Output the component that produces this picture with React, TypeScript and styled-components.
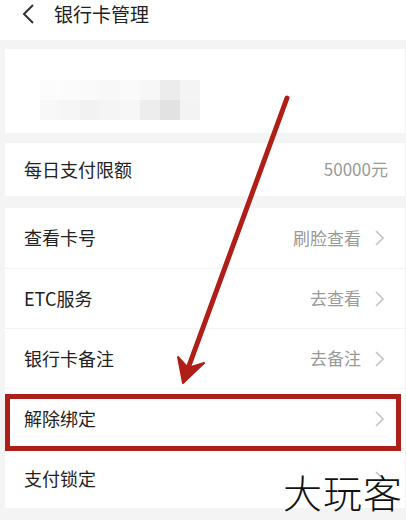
import { FC } from 'react'
import styled, { createGlobalStyle } from 'styled-components'

const GlobalStyle = createGlobalStyle`
  html, body {
    margin: 0;
    padding: 0;
    background: #f4f4f4;
  }
  * {
    box-sizing: border-box;
  }
`

const Page = styled.div`
  position: relative;
  width: 406px;
  height: 520px;
  overflow: hidden;
  background: #f4f4f4;
  font-family: 'Noto Sans CJK SC', 'Noto Sans', sans-serif;
`

const Header = styled.div`
  display: flex;
  align-items: flex-start;
  gap: 18px;
  height: 40px;
  padding-left: 22px;
  background: #fff;
  color: #222;
  font-size: 19px;
  line-height: 28px;
`

const Body = styled.div`
  display: flex;
  flex-direction: column;
  padding: 0 1px 0 5px;
`

const CardBox = styled.div`
  height: 84px;
  margin-top: 9px;
  padding: 31px 0 0 35px;
  background: #fff;
`

const Mosaic = styled.div`
  display: grid;
  grid-template-columns: repeat(8, 20px);
  grid-auto-rows: 20px;
`

const Tile = styled.div<{ $shade: string }>`
  background: ${(p) => p.$shade};
`

const Group = styled.div<{ $gap: number }>`
  display: flex;
  flex-direction: column;
  margin-top: ${(p) => p.$gap}px;
  background: #fff;
`

const Row = styled.div<{ $h: number }>`
  display: flex;
  align-items: center;
  height: ${(p) => p.$h}px;
  padding: 0 21px 0 19px;
  border-top: 1px solid #f3f3f3;
  &:first-child {
    border-top: none;
  }
`

const Label = styled.div`
  flex: 1;
  color: #222;
  font-size: 18px;
  margin-top: -2px;
`

const Value = styled.div<{ $plain?: boolean }>`
  color: #999;
  font-size: 17px;
  margin-top: -2px;
  margin-right: ${(p) => (p.$plain ? '-4px' : '14px')};
`

const Overlay = styled.svg`
  position: absolute;
  left: 0;
  top: 0;
  pointer-events: none;
`

const Watermark = styled.div`
  position: absolute;
  right: 3px;
  bottom: 1px;
  color: #111;
  font-size: 39px;
  font-weight: 300;
  letter-spacing: 1px;
  line-height: normal;
`

const BackIcon = () => (
  <svg width="14" height="22" viewBox="0 0 14 22" style={{ marginTop: 3 }}>
    <polyline points="11,2 2,11 11,20" fill="none" stroke="#333" strokeWidth="2" />
  </svg>
)

const Chevron = () => (
  <svg width="9" height="16" viewBox="0 0 9 16">
    <polyline points="1,1 8,8 1,15" fill="none" stroke="#c4c4c4" strokeWidth="1.6" />
  </svg>
)

const shades = [
  '#fcfcfc', '#fbfbfb', '#fafafa', '#f8f8f8', '#fafafa', '#f7f7f7', '#ececec', '#f4f4f4',
  '#f8f8f8', '#f6f6f6', '#f2f2f2', '#f5f5f5', '#f7f7f7', '#ededed', '#e2e2e2', '#f3f3f3',
]

type Item = { label: string; value?: string }

const items: Item[] = [
  { label: '查看卡号', value: '刷脸查看' },
  { label: 'ETC服务', value: '去查看' },
  { label: '银行卡备注', value: '去备注' },
  { label: '解除绑定' },
  { label: '支付锁定' },
]

const App: FC = () => {
  return (
    <Page>
      <GlobalStyle />
      <Header>
        <BackIcon />
        <span>银行卡管理</span>
      </Header>
      <Body>
        <CardBox>
          <Mosaic>
            {shades.map((s, i) => (
              <Tile key={i} $shade={s} />
            ))}
          </Mosaic>
        </CardBox>
        <Group $gap={10}>
          <Row $h={53}>
            <Label>每日支付限额</Label>
            <Value $plain>50000元</Value>
          </Row>
        </Group>
        <Group $gap={12}>
          {items.map((it) => (
            <Row key={it.label} $h={60}>
              <Label>{it.label}</Label>
              {it.value && <Value>{it.value}</Value>}
              <Chevron />
            </Row>
          ))}
        </Group>
      </Body>
      <Overlay width="406" height="520" viewBox="0 0 406 520">
        <line x1="287" y1="98" x2="186" y2="374" stroke="#b01e18" strokeWidth="5" strokeLinecap="round" />
        <path d="M183 383 L178 357 L188 368 L204 363 Z" fill="#b01e18" stroke="#b01e18" strokeWidth="2" strokeLinejoin="round" />
        <rect x="7.5" y="396.5" width="391" height="52" fill="none" stroke="#ad1f19" strokeWidth="5" />
      </Overlay>
      <Watermark>大玩客</Watermark>
    </Page>
  )
}

export default App
